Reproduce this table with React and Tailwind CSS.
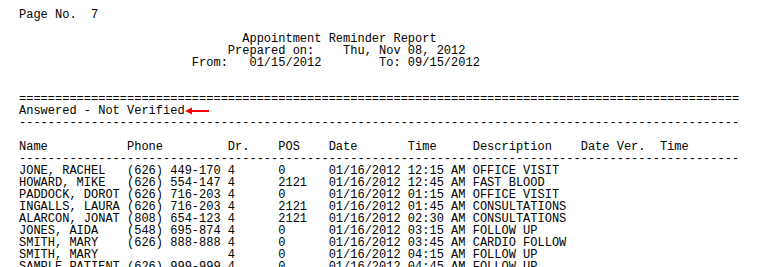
import React from 'react';

const rows = [
  ['JONE, RACHEL', '(626) 449-170', '4', '0', '01/16/2012', '12:15 AM', 'OFFICE VISIT'],
  ['HOWARD, MIKE', '(626) 554-147', '4', '2121', '01/16/2012', '12:45 AM', 'FAST BLOOD'],
  ['PADDOCK, DOROT', '(626) 716-203', '4', '0', '01/16/2012', '01:15 AM', 'OFFICE VISIT'],
  ['INGALLS, LAURA', '(626) 716-203', '4', '2121', '01/16/2012', '01:45 AM', 'CONSULTATIONS'],
  ['ALARCON, JONAT', '(808) 654-123', '4', '2121', '01/16/2012', '02:30 AM', 'CONSULTATIONS'],
  ['JONES, AIDA', '(548) 695-874', '4', '0', '01/16/2012', '03:15 AM', 'FOLLOW UP'],
  ['SMITH, MARY', '(626) 888-888', '4', '0', '01/16/2012', '03:45 AM', 'CARDIO FOLLOW'],
  ['SMITH, MARY', '', '4', '0', '01/16/2012', '04:15 AM', 'FOLLOW UP'],
  ['SAMPLE PATIENT', '(626) 999-999', '4', '0', '01/16/2012', '04:45 AM', 'FOLLOW UP'],
];

// fixed-width report line, same column stops as the printed report
const line = ([name, phone, dr, pos, date, time, desc]) =>
  name.padEnd(15) + phone.padEnd(14) + dr.padEnd(7) + pos.padEnd(7) + date.padEnd(11) + time.padEnd(9) + desc;

const ArrowLeft = () => (
  <svg width="24" height="8" viewBox="0 0 24 8" className="inline-block align-[-1px]">
    <path d="M0 4 L7 0.5 L7 7.5 Z" fill="#ff0000" />
    <rect x="6" y="3" width="18" height="2" fill="#ff0000" />
  </svg>
);

export default function App() {
  return (
    <div className="w-[758px] h-[267px] overflow-hidden bg-white pl-[19px] pt-[9px] text-black font-['Liberation_Mono','Courier_New',monospace] text-[12px] leading-[12px]">
      <pre className="font-[inherit]">
        {'Page No.  7\n'}
        {'\n'}
        {'                               Appointment Reminder Report\n'}
        {'                             Prepared on:    Thu, Nov 08, 2012\n'}
        {'                        From:   01/15/2012        To: 09/15/2012\n'}
        {'\n'}
        {'\n'}
        {'='.repeat(100) + '\n'}
        {'Answered - Not Verified'}
        <ArrowLeft />
        {'\n'}
        {'-'.repeat(100) + '\n'}
        {'\n'}
        {'Name           Phone         Dr.    POS    Date       Time     Description    Date Ver.  Time\n'}
        {'-'.repeat(100) + '\n'}
        {rows.map((r) => line(r) + '\n').join('')}
      </pre>
    </div>
  );
}
